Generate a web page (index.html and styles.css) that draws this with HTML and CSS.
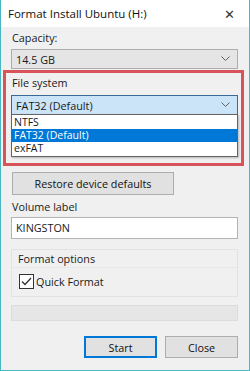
FILE: index.html
```html
<!DOCTYPE html>
<html lang="en">
<head>
    <meta charset="UTF-8">
    <title>Format Install Ubuntu (H:)</title>
    <link rel="stylesheet" href="styles.css">
</head>
<body>
    <div class="window">
        <div class="titlebar">
            <span class="title">Format Install Ubuntu (H:)</span>
            <span class="close">&#x2715;</span>
        </div>
        <div class="content">
            <label class="label">Capacity:</label>
            <div class="combo readonly">
                <span>14.5 GB</span>
                <svg class="arrow" width="9" height="6" viewBox="0 0 9 6"><path d="M0.5 0.5 L4.5 4.5 L8.5 0.5" fill="none" stroke="#606060" stroke-width="1"/></svg>
            </div>

            <div class="fs-section">
                <label class="label">File system</label>
                <div class="combo active">
                    <span>FAT32 (Default)</span>
                    <svg class="arrow" width="9" height="6" viewBox="0 0 9 6"><path d="M0.5 0.5 L4.5 4.5 L8.5 0.5" fill="none" stroke="#606060" stroke-width="1"/></svg>
                </div>
                <!-- covered by the open list -->
                <div class="covered">
                    <label class="label">Allocation unit size</label>
                    <div class="combo">
                        <span>4096 bytes</span>
                    </div>
                </div>
                <ul class="dropdown">
                    <li>NTFS</li>
                    <li class="selected">FAT32 (Default)</li>
                    <li>exFAT</li>
                </ul>
                <div class="highlight"></div>
            </div>

            <button class="btn restore">Restore device defaults</button>

            <label class="label vol">Volume label</label>
            <div class="input">KINGSTON</div>

            <div class="group">
                <div class="group-title">Format options</div>
                <div class="check-row">
                    <span class="checkbox">
                        <svg width="13" height="13" viewBox="0 0 13 13"><path d="M2 6.5 L5 9.5 L11 3" fill="none" stroke="#333" stroke-width="1.3"/></svg>
                    </span>
                    <span>Quick Format</span>
                </div>
            </div>

            <div class="progress"></div>

            <div class="actions">
                <button class="btn default">Start</button>
                <button class="btn">Close</button>
            </div>
        </div>
    </div>
</body>
</html>
```

FILE: styles.css
```css
html, body {
    margin: 0;
    padding: 0;
}

body {
    font-family: "Open Sans", "Liberation Sans", sans-serif;
    font-size: 10.8px;
    color: #1a1a1a;
    background: #ffffff;
}

.window {
    width: 248px;
    height: 370px;
    border: 1px solid #4bb6c4;
    border-top: none;
    background-color: #f0f0f0;
    display: flex;
    flex-direction: column;
}

.titlebar {
    height: 27px;
    background: #ffffff;
    display: flex;
    align-items: center;
    justify-content: space-between;
    padding: 0 14px 0 7px;
}

.title {
    font-size: 11.5px;
    color: #111;
}

.close {
    font-size: 13px;
    color: #333;
}

.content {
    padding: 3px 11px 0 10px;
    display: flex;
    flex-direction: column;
}

.label {
    display: block;
    height: 16px;
    line-height: 16px;
    padding-left: 1px;
}

.combo {
    height: 18px;
    border: 1px solid #adadad;
    background: #e5e5e5;
    display: flex;
    align-items: center;
    justify-content: space-between;
    padding: 0 7px 0 4px;
    margin-top: 3px;
}

.combo.active {
    background: #cce4f7;
    border-color: #3c6a96;
}

.fs-section {
    position: relative;
    margin-top: 6px;
}

.fs-section .combo.active {
    margin-top: 4px;
}

.covered {
    visibility: hidden;
}

.dropdown {
    position: absolute;
    top: 39px;
    left: 0;
    right: 0;
    margin: 0;
    padding: 1px 0;
    list-style: none;
    background: #ffffff;
    border: 1px solid #646464;
    box-shadow: 1px 1px 2px rgba(0, 0, 0, 0.25);
}

.dropdown li {
    height: 13px;
    line-height: 13px;
    font-size: 10.5px;
    padding-left: 2px;
    overflow: hidden;
}

.dropdown li.selected {
    background: #0078d7;
    color: #ffffff;
}

.highlight {
    position: absolute;
    top: -5px;
    left: -8px;
    right: -6px;
    bottom: -12px;
    border: 3px solid #d9535a;
    pointer-events: none;
}

.btn {
    font-family: inherit;
    font-size: 10.8px;
    color: #111;
    background: #e1e1e1;
    border: 1px solid #adadad;
    padding: 0;
    height: 23px;
}

.restore {
    margin-top: 18px;
    width: 162px;
    margin-left: 1px;
}

.vol {
    margin-top: 4px;
}

.input {
    height: 20px;
    line-height: 20px;
    border: 1px solid #b5b5b5;
    background: #ffffff;
    padding-left: 4px;
    margin-top: 2px;
}

.group {
    margin-top: 10px;
    height: 46px;
    border: 1px solid #e3e3e3;
    padding: 0 0 0 7px;
}

.group-title {
    height: 17px;
    line-height: 17px;
    border-bottom: 1px solid #e8e8e8;
    margin-left: -7px;
    padding-left: 6px;
}

.check-row {
    display: flex;
    align-items: center;
    gap: 2px;
    margin-top: 6px;
}

.checkbox {
    width: 13px;
    height: 13px;
    border: 1px solid #333;
    background: #fff;
    display: inline-flex;
}

.progress {
    height: 14px;
    margin-top: 8px;
    border: 1px solid #dcdcdc;
    background: #e6e6e6;
}

.actions {
    display: flex;
    justify-content: flex-end;
    gap: 8px;
    margin-top: 15px;
}

.actions .btn {
    width: 73px;
    height: 22px;
}

.btn.default {
    border: 2px solid #0078d7;
}
```
